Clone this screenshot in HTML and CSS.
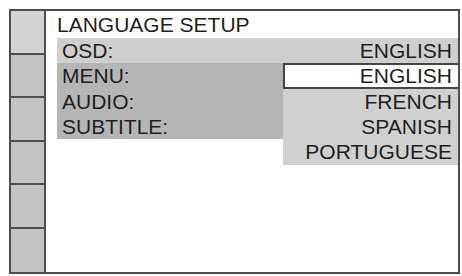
FILE: index.html
```html
<!DOCTYPE html>
<html>
<head>
<meta charset="utf-8">
<link rel="stylesheet" href="styles.css">
</head>
<body>
<div class="screen">
  <div class="sidebar">
    <div class="cell cell-top"></div>
    <div class="cell"></div>
    <div class="cell"></div>
    <div class="cell"></div>
    <div class="cell"></div>
    <div class="cell"></div>
  </div>
  <div class="main">
    <div class="title">LANGUAGE SETUP</div>
    <div class="row-osd">
      <span class="label">OSD:</span>
      <span class="value">ENGLISH</span>
    </div>
    <div class="lower">
      <div class="labels">
        <div class="label-row">MENU:</div>
        <div class="label-row">AUDIO:</div>
        <div class="label-row">SUBTITLE:</div>
      </div>
      <div class="popup">
        <div class="option selected">ENGLISH</div>
        <div class="option">FRENCH</div>
        <div class="option">SPANISH</div>
        <div class="option">PORTUGUESE</div>
      </div>
    </div>
  </div>
</div>
</body>
</html>
```

FILE: styles.css
```css
html, body {
  margin: 0;
  padding: 0;
  background: #ffffff;
}

body {
  font-family: "Liberation Sans", Arial, sans-serif;
  color: #1f1f1f;
}

.screen {
  box-sizing: border-box;
  margin: 9px 0 0 9px;
  width: 451px;
  height: 265px;
  border: 2px solid #4e4e4e;
  display: flex;
  background: #ffffff;
}

.sidebar {
  width: 33px;
  border-right: 2px solid #4e4e4e;
  display: grid;
  grid-template-rows: repeat(6, 1fr);
}

.cell {
  background: #c4c4c4;
  border-bottom: 2px solid #4e4e4e;
}

.cell:last-child {
  border-bottom: none;
}

.cell-top {
  background: #d3d3d3;
}

.main {
  flex: 1;
  padding-left: 11px;
  display: flex;
  flex-direction: column;
}

.title {
  height: 27px;
  line-height: 28px;
  font-size: 21px;
  white-space: nowrap;
}

.row-osd {
  height: 25px;
  background: #cfcfcf;
  display: flex;
  justify-content: space-between;
  align-items: center;
  font-size: 21px;
  padding: 0 6px 0 5px;
}

.lower {
  display: flex;
  align-items: flex-start;
}

.labels {
  width: 226px;
  height: 76px;
  background: #b5b5b5;
  padding-left: 5px;
  box-sizing: border-box;
}

.label-row {
  height: 25px;
  line-height: 25px;
  font-size: 21px;
}

.label-row:first-child {
  height: 26px;
  line-height: 26px;
}

.popup {
  flex: 1;
  background: #d0d0d0;
  height: 102px;
  display: flex;
  flex-direction: column;
}

.option {
  height: 25px;
  line-height: 25px;
  font-size: 21px;
  text-align: right;
  padding-right: 6px;
}

.option.selected {
  box-sizing: border-box;
  height: 26px;
  line-height: 22px;
  background: #ffffff;
  border: 2px solid #464646;
  border-right: none;
}
```
